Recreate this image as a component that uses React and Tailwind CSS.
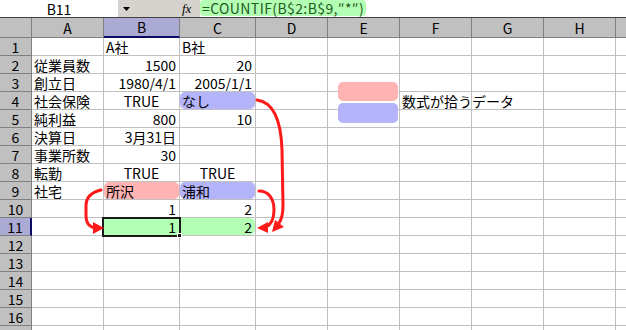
import React from "react";

const font = { fontFamily: '"Noto Sans CJK JP", "Noto Sans", sans-serif' };

const COLS = [
  { k: "A", w: "w-[72px]" },
  { k: "B", w: "w-[76px]" },
  { k: "C", w: "w-[76px]" },
  { k: "D", w: "w-[72px]" },
  { k: "E", w: "w-[72px]" },
  { k: "F", w: "w-[72px]" },
  { k: "G", w: "w-[72px]" },
  { k: "H", w: "w-[72px]" }
];

// a: l / r / c, fill: pink / blue / green / greenEnd
const data = {
  1: { B: { t: "A社" }, C: { t: "B社" } },
  2: { A: { t: "従業員数" }, B: { t: "1500", a: "r" }, C: { t: "20", a: "r" } },
  3: { A: { t: "創立日" }, B: { t: "1980/4/1", a: "r" }, C: { t: "2005/1/1", a: "r" } },
  4: { A: { t: "社会保険" }, B: { t: "TRUE", a: "c" }, C: { t: "なし", fill: "blue" }, F: { t: "数式が拾うデータ", over: true } },
  5: { A: { t: "純利益" }, B: { t: "800", a: "r" }, C: { t: "10", a: "r" } },
  6: { A: { t: "決算日" }, B: { t: "3月31日", a: "r" } },
  7: { A: { t: "事業所数" }, B: { t: "30", a: "r" } },
  8: { A: { t: "転勤" }, B: { t: "TRUE", a: "c" }, C: { t: "TRUE", a: "c" } },
  9: { A: { t: "社宅" }, B: { t: "所沢", fill: "pink" }, C: { t: "浦和", fill: "blue" } },
  10: { B: { t: "1", a: "r" }, C: { t: "2", a: "r" } },
  11: { B: { t: "1", a: "r", fill: "green" }, C: { t: "2", a: "r", fill: "greenEnd" } }
};

const fills = {
  pink: "bg-[#ffb3b3] rounded-[5px] text-[#3a0d0d]",
  blue: "bg-[#b4b4fb] rounded-[5px] text-[#0a0a6a]",
  green: "bg-[#b3ffb3] text-[#0b3d0b]",
  greenEnd: "bg-[#b3ffb3] rounded-r-[5px] text-[#0b3d0b]"
};

const align = {
  l: "justify-start pl-[2px]",
  r: "justify-end pr-[3px]",
  c: "justify-center"
};

const Cell = ({ cell, w }) => {
  const a = align[cell?.a || "l"];
  return (
    <div className={`${w} h-[18px] shrink-0 border-r border-b border-[#c0c0c0] ${cell?.over ? "relative z-10 overflow-visible" : "overflow-hidden"}`}>
      {cell && (
        <div className={`flex h-full items-center whitespace-nowrap text-[14px] leading-none text-black ${a} ${cell.fill ? fills[cell.fill] : ""}`}>
          {cell.t}
        </div>
      )}
    </div>
  );
};

const Arrows = () => (
  <svg className="pointer-events-none absolute left-0 top-0 z-20" width="626" height="330" viewBox="0 0 626 330">
    <g fill="none" stroke="#ff1a1a" strokeWidth="3" strokeLinecap="round">
      <path d="M257 100 C272 102 281 118 282 150 L283 205 C283 214 282 219 279 223" />
      <path d="M259 191 C268 191 274 198 274 210 C274 219 272 224 266 227" />
      <path d="M101 190 C92 192 86 197 86 206 L86 216 C86 222 88 226 94 228" />
    </g>
    <g fill="#ff1a1a">
      <polygon points="272,232 275,220 284,227" />
      <polygon points="257,228 268,222 268,233" />
      <polygon points="104,228 93,222 93,234" />
    </g>
  </svg>
);

const App = () => {
  const rows = Array.from({ length: 17 }, (_, i) => i + 1);

  return (
    <div className="relative h-[330px] w-[626px] overflow-hidden bg-white" style={font}>
      {/* formula bar */}
      <div className="flex h-[18px] border-b border-[#404040]">
        <div className="flex w-[118px] items-center justify-center bg-white text-[14px] leading-none">B11</div>
        <div className="flex w-[82px] items-center bg-[#d6d3ce]">
          <svg className="ml-[5px]" width="7" height="4" viewBox="0 0 7 4">
            <polygon points="0,0 7,0 3.5,4" fill="#000" />
          </svg>
          <span className="ml-[52px] text-[13px] italic leading-none" style={{ fontFamily: '"Liberation Serif", serif' }}>
            fx
          </span>
        </div>
        <div className="flex flex-1 items-start bg-white">
          <div className="flex h-[16px] items-center rounded-[4px] bg-[#b3ffb3] px-[2px] text-[14px] leading-none tracking-[0.4px] text-[#1f5a1f]">
            =COUNTIF(B$2:B$9,″*″)
          </div>
        </div>
      </div>

      {/* column headers */}
      <div className="flex h-[20px]">
        <div className="h-full w-[32px] shrink-0 border-r border-b border-[#808080] bg-[#c0c0c0]" />
        {COLS.map((c) => (
          <div
            key={c.k}
            className={`${c.w} flex h-full shrink-0 items-center justify-center border-r text-[14px] leading-none ${
              c.k === "B" ? "border-b-2 border-b-[#0a0a60] border-r-[#808080] bg-[#aaaad4]" : "border-b border-[#808080] bg-[#c0c0c0]"
            }`}
          >
            {c.k}
          </div>
        ))}
        <div className="h-full flex-1 border-b border-[#808080] bg-[#c0c0c0]" />
      </div>

      {/* rows */}
      {rows.map((r) => (
        <div key={r} className="flex h-[18px]">
          <div
            className={`flex h-full w-[32px] shrink-0 items-center justify-center border-b border-[#808080] text-[14px] leading-none ${
              r === 11 ? "border-r-2 border-r-[#0a0a60] bg-[#aaaad4]" : "border-r bg-[#c0c0c0]"
            }`}
          >
            {r}
          </div>
          {COLS.map((c) => (
            <Cell key={c.k} w={c.w} cell={data[r]?.[c.k]} />
          ))}
          <div className="h-full flex-1 border-b border-[#c0c0c0]" />
        </div>
      ))}

      {/* legend swatches */}
      <div className="absolute left-[338px] top-[82px] h-[19px] w-[60px] rounded-[5px] bg-[#ffb3b3]" />
      <div className="absolute left-[338px] top-[103px] h-[20px] w-[60px] rounded-[5px] bg-[#b4b4fb]" />

      {/* active cell B11 */}
      <div className="absolute left-[102px] top-[217px] h-[20px] w-[79px] border-2 border-[#1a1a1a]" />
      <div className="absolute left-[177px] top-[233px] h-[5px] w-[5px] border border-white bg-[#1a1a1a]" />

      <Arrows />
    </div>
  );
};

export default App;
